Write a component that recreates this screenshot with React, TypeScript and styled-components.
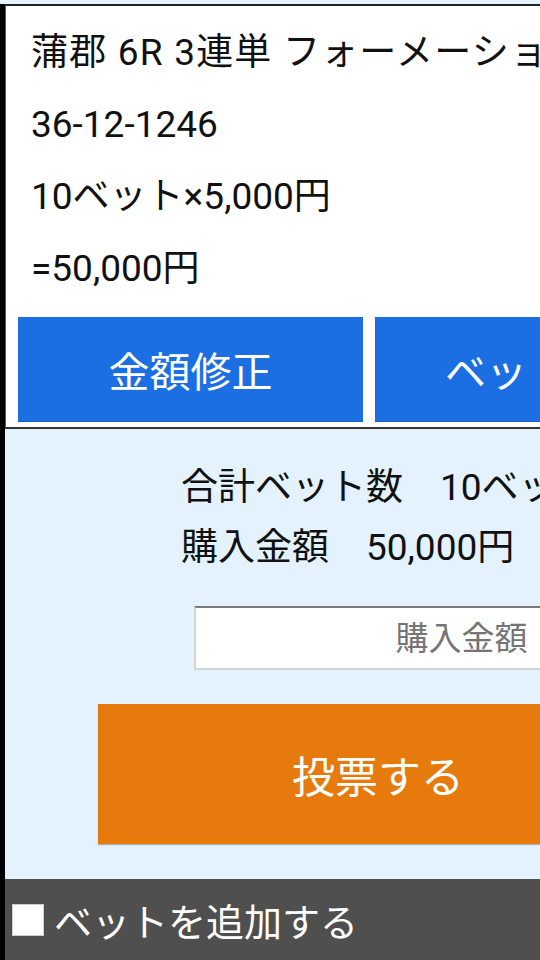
import styled, { createGlobalStyle } from "styled-components";

const GlobalStyle = createGlobalStyle`
  html, body {
    margin: 0;
    padding: 0;
    overflow: hidden;
    background: #e3f2fd;
  }
  body {
    font-family: Roboto, "Noto Sans CJK JP", sans-serif;
  }
`;

const StyledPage = styled.div`
  width: 740px;
  height: 100vh;
  padding-top: 4px;
  box-sizing: border-box;
  display: flex;
  flex-direction: column;
  background: #e3f2fd;
`;

const StyledFrame = styled.div`
  flex: 1;
  display: flex;
  flex-direction: column;
  border-left: 5px solid #000;
`;

const StyledBetCard = styled.section`
  background: #fff;
  border-top: 2px solid #222;
  border-bottom: 2px solid #333;
  border-left: 1px solid #555;
  padding: 13px 12px 5px;

  .actions {
    margin-top: 10px;
    display: flex;
    gap: 12px;
  }
`;

const StyledBetLine = styled.div<{ $title?: boolean }>`
  padding-left: 13px;
  font-size: 37px;
  line-height: 68px;
  height: 72px;
  color: #111;
  white-space: nowrap;
  letter-spacing: ${(p) => (p.$title ? "1.2px" : "0")};
`;

const StyledCardButton = styled.button`
  flex: 0 0 345px;
  height: 105px;
  border: none;
  border-bottom: 1px solid #155ec4;
  background: #1b6fe2;
  color: #fff;
  font-family: inherit;
  font-size: 41px;
  padding: 0;
  white-space: nowrap;
  overflow: hidden;
`;

const StyledSummary = styled.section`
  flex: 1;
  display: flex;
  flex-direction: column;
  background: #e3f2fd;

  .totals {
    margin: 29px 0 0 176px;
    font-size: 37px;
    line-height: 60px;
    color: #111;
    white-space: nowrap;
  }
  .amount-input {
    align-self: center;
    margin-top: 28px;
    width: 358px;
    height: 64px;
    box-sizing: border-box;
    border: 2px solid #d4d4d4;
    border-top-color: #7a7a7a;
    background: #fff;
    padding: 0 22px;
    font-family: inherit;
    font-size: 33px;
    text-align: right;
    outline: none;
  }
  .amount-input::placeholder {
    color: #757575;
  }
`;

const StyledVoteButton = styled.button`
  align-self: flex-start;
  margin: 34px 0 0 93px;
  width: 560px;
  height: 140px;
  border: none;
  background: #e77a0c;
  box-shadow: 0 1px 1px rgba(0, 0, 0, 0.25);
  color: #fff;
  font-family: inherit;
  font-size: 43px;
  padding: 0;
`;

const StyledFooter = styled.footer`
  height: 81px;
  flex: 0 0 81px;
  display: flex;
  align-items: center;
  gap: 10px;
  padding-left: 7px;
  background: #4f4f4f;
  color: #fff;
  font-size: 38px;

  .check {
    width: 32px;
    height: 32px;
    box-sizing: border-box;
    background: #fff;
    border: 1px solid #cfcfcf;
  }
`;

const App = () => {
  return (
    <>
      <GlobalStyle />
      <StyledPage>
        <StyledFrame>
          <StyledBetCard>
            <StyledBetLine $title>蒲郡 6R 3連単 フォーメーション</StyledBetLine>
            <StyledBetLine>36-12-1246</StyledBetLine>
            <StyledBetLine>10ベット×5,000円</StyledBetLine>
            <StyledBetLine>=50,000円</StyledBetLine>
            <div className="actions">
              <StyledCardButton>金額修正</StyledCardButton>
              <StyledCardButton>ベット削除</StyledCardButton>
            </div>
          </StyledBetCard>
          <StyledSummary>
            <div className="totals">
              <div>合計ベット数　10ベット</div>
              <div>購入金額　50,000円</div>
            </div>
            <input className="amount-input" placeholder="購入金額" />
            <StyledVoteButton>投票する</StyledVoteButton>
          </StyledSummary>
          <StyledFooter>
            <span className="check" />
            <span>ベットを追加する</span>
          </StyledFooter>
        </StyledFrame>
      </StyledPage>
    </>
  );
};

export default App;
